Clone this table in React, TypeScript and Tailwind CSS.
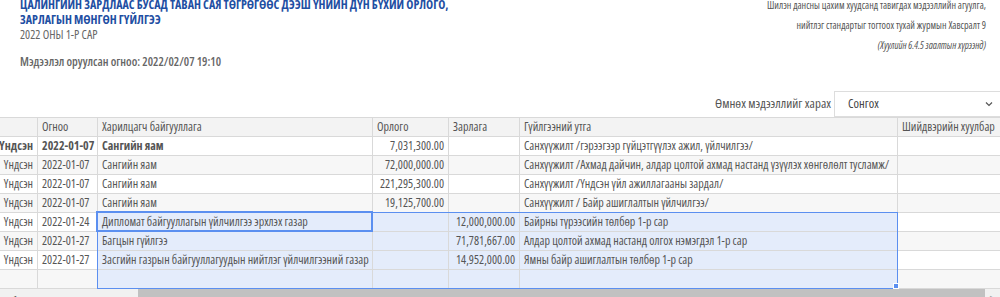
import React from "react";

interface Row {
  type: string;
  date: string;
  org: string;
  income: string;
  expense: string;
  desc: string;
  bold?: boolean;
}

const rows: Row[] = [
  { type: "Үндсэн", date: "2022-01-07", org: "Сангийн яам", income: "7,031,300.00", expense: "", desc: "Санхүүжилт /гэрээгээр гүйцэтгүүлэх ажил, үйлчилгээ/", bold: true },
  { type: "Үндсэн", date: "2022-01-07", org: "Сангийн яам", income: "72,000,000.00", expense: "", desc: "Санхүүжилт /Ахмад дайчин, алдар цолтой ахмад настанд үзүүлэх хөнгөлөлт тусламж/" },
  { type: "Үндсэн", date: "2022-01-07", org: "Сангийн яам", income: "221,295,300.00", expense: "", desc: "Санхүүжилт /Үндсэн үйл ажиллагааны зардал/" },
  { type: "Үндсэн", date: "2022-01-07", org: "Сангийн яам", income: "19,125,700.00", expense: "", desc: "Санхүүжилт / Байр ашиглалтын үйлчилгээ/" },
  { type: "Үндсэн", date: "2022-01-24", org: "Дипломат байгууллагын үйлчилгээ эрхлэх газар", income: "", expense: "12,000,000.00", desc: "Байрны түрээсийн төлбөр 1-р сар" },
  { type: "Үндсэн", date: "2022-01-27", org: "Багцын гүйлгээ", income: "", expense: "71,781,667.00", desc: "Алдар цолтой ахмад настанд олгох нэмэгдэл 1-р сар" },
  { type: "Үндсэн", date: "2022-01-27", org: "Засгийн газрын байгууллагуудын нийтлэг үйлчилгээний газар", income: "", expense: "14,952,000.00", desc: "Ямны байр ашиглалтын төлбөр 1-р сар" },
  { type: "", date: "", org: "", income: "", expense: "", desc: "" },
];

const headers = ["", "Огноо", "Харилцагч байгууллага", "Орлого", "Зарлага", "Гүйлгээний утга", "Шийдвэрийн хуулбар"];

export default function App() {
  const td = "h-[19px] border border-[#d9d9d9] px-[4px] py-0 whitespace-nowrap overflow-hidden";

  return (
    <div className="h-[297px] w-[1000px] overflow-hidden bg-white text-[#555] [font-family:'Open_Sans',sans-serif] [font-stretch:condensed]">
      {/* heading */}
      <div className="-mt-[3px] flex items-start justify-between">
        <div className="pl-[20px]">
          <h1 className="whitespace-nowrap text-[12px] font-bold leading-[15px] text-[#1f4fa3]">
            ЦАЛИНГИЙН ЗАРДЛААС БУСАД ТАВАН САЯ ТӨГРӨГӨӨС ДЭЭШ ҮНИЙН ДҮН БҮХИЙ ОРЛОГО,
            <br />
            ЗАРЛАГЫН МӨНГӨН ГҮЙЛГЭЭ
          </h1>
          <p className="text-[12px] leading-[15px] text-[#666]">2022 ОНЫ 1-Р САР</p>
          <p className="mt-[12px] text-[12px] font-semibold leading-[15px] text-[#666]">
            Мэдээлэл оруулсан огноо: 2022/02/07 19:10
          </p>
        </div>
        <div className="-mt-[2px] whitespace-nowrap pr-[14px] text-right text-[10px] leading-[20px] text-[#555]">
          <p>Шилэн дансны цахим хуудсанд тавигдах мэдээллийн агуулга,</p>
          <p>нийтлэг стандартыг тогтоох тухай журмын Хавсралт 9</p>
          <p className="italic">(Хуулийн 6.4.5 заалтын хүрээнд)</p>
        </div>
      </div>

      {/* history select */}
      <div className="mt-[22px] flex items-center justify-end">
        <span className="mr-[3px] text-[13px] text-[#555]">Өмнөх мэдээллийг харах</span>
        <div className="-mr-[8px] flex h-[26px] w-[174px] items-center justify-between border border-[#ddd] pl-[13px] pr-[13px] text-[12.5px] text-[#444]">
          <span>Сонгох</span>
          <svg width="10" height="10" viewBox="0 0 10 10" fill="none" stroke="#555" strokeWidth="1.2">
            <path d="M2 3.5 L5 6.5 L8 3.5" />
          </svg>
        </div>
      </div>

      {/* grid, scrolled a few px to the right */}
      <div className="relative overflow-hidden">
        <table className="-ml-[10px] w-[1037px] table-fixed border-collapse text-[12px] leading-[18px]">
          <colgroup>
            <col className="w-[47px]" />
            <col className="w-[60px]" />
            <col className="w-[275px]" />
            <col className="w-[76px]" />
            <col className="w-[71px]" />
            <col className="w-[378px]" />
            <col className="w-[130px]" />
          </colgroup>
          <thead>
            <tr className="bg-[#f3f3f3] text-left text-[#555]">
              {headers.map((h, i) => (
                <th key={i} className={`${td} font-normal`}>
                  {h}
                </th>
              ))}
            </tr>
          </thead>
          <tbody>
            {rows.map((r, i) => {
              const sel = i >= 4;
              const stripe = i % 2 === 1 ? "bg-[#f7f7f7]" : "bg-white";
              const selBg = sel ? "bg-[#e4ecfb]" : stripe;
              const b = r.bold ? "font-bold" : "";
              return (
                <tr key={i} className={stripe}>
                  <td className={`${td} ${b} text-right`}>{r.type}</td>
                  <td className={`${td} ${b}`}>{r.date}</td>
                  <td className={`${td} ${selBg} ${b}`}>{r.org}</td>
                  <td className={`${td} ${selBg} text-right`}>{r.income}</td>
                  <td className={`${td} ${selBg} text-right`}>{r.expense}</td>
                  <td className={`${td} ${selBg}`}>{r.desc}</td>
                  <td className={td}></td>
                </tr>
              );
            })}
          </tbody>
        </table>

        {/* selection range */}
        <div className="pointer-events-none absolute left-[97px] top-[95px] h-[77px] w-[801px] border border-[#5b8ff0]" />
        <div className="pointer-events-none absolute left-[96px] top-[94px] h-[21px] w-[277px] border-2 border-[#5b8ff0]" />
        <div className="pointer-events-none absolute left-[893px] top-[166px] h-[6px] w-[6px] border border-white bg-[#5b8ff0]" />
      </div>

      {/* horizontal scrollbar */}
      <div className="flex h-[17px] bg-[#f1f1f1]">
        <div className="flex w-[138px] items-center pl-[10px]">
          <span className="text-[8px] text-[#505050]">◀</span>
        </div>
        <div className="w-[847px] bg-[#c1c1c1]" />
        <div className="flex flex-1 items-center justify-center">
          <span className="text-[8px] text-[#a0a0a0]">▶</span>
        </div>
      </div>
    </div>
  );
}
